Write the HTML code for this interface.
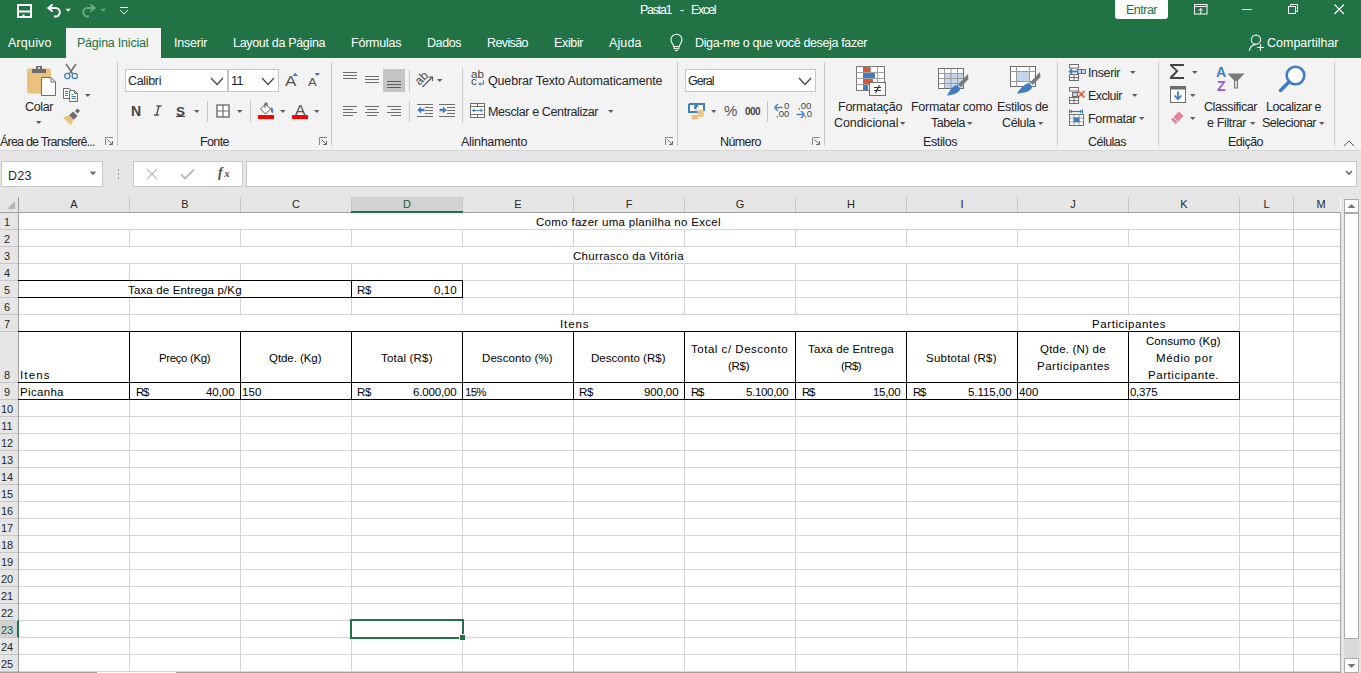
<!DOCTYPE html>
<html><head><meta charset="utf-8">
<style>
*{box-sizing:border-box}
html,body{margin:0;padding:0}
body{width:1361px;height:673px;overflow:hidden;position:relative;background:#fff;font-family:"Liberation Sans",sans-serif;font-size:12px;color:#000}
.a{position:absolute}
.t{position:absolute;white-space:nowrap;line-height:15px;font-size:12px}
svg{position:absolute;overflow:visible}
</style></head><body>

<div class="a" style="left:0px;top:0px;width:1361px;height:58px;background:#217346;"></div>
<div class="a" style="left:66px;top:28px;width:95px;height:30px;background:#f3f3f3;"></div>
<div class="a" style="left:0px;top:58px;width:1361px;height:92px;background:#f3f3f3;"></div>
<div class="a" style="left:0px;top:150px;width:1361px;height:1px;background:#d6d6d6;"></div>
<div class="a" style="left:0px;top:151px;width:1361px;height:46px;background:#e6e6e6;"></div>
<svg style="left:17px;top:4px" width="16" height="15" viewBox="0 0 16 15"><path d="M1 1 H14 V13 H1 Z" fill="none" stroke="#fff" stroke-width="2"/><path d="M2 7.5 H13" stroke="#fff" stroke-width="2"/><rect x="5.5" y="10.5" width="2" height="2.5" fill="#fff"/></svg>
<svg style="left:46px;top:3px" width="20" height="16" viewBox="0 0 20 16"><path d="M2.5 5 H9.5 A4.3 4.3 0 0 1 9.5 13.6 H8" fill="none" stroke="#fff" stroke-width="2"/><path d="M0.8 5 L6 0.8 L7.2 2.2 L3.6 5 L7.2 7.8 L6 9.2 Z" fill="#fff"/></svg>
<svg style="left:65px;top:8px" width="7" height="5" viewBox="0 0 7 5"><path d="M0.5 0.8 H6 L3.25 3.8 Z" fill="#fff"/></svg>
<svg style="left:81px;top:3px" width="20" height="16" viewBox="0 0 20 16"><path d="M13.5 5 H6.5 A4.3 4.3 0 0 0 6.5 13.6 H8" fill="none" stroke="#6ba887" stroke-width="2"/><path d="M15.2 5 L10 0.8 L8.8 2.2 L12.4 5 L8.8 7.8 L10 9.2 Z" fill="#6ba887"/></svg>
<svg style="left:100px;top:8px" width="7" height="5" viewBox="0 0 7 5"><path d="M0.5 0.8 H6 L3.25 3.8 Z" fill="#6ba887"/></svg>
<svg style="left:119px;top:6px" width="10" height="9" viewBox="0 0 10 9"><path d="M1 1.5 H9" stroke="#fff" stroke-width="1"/><path d="M1.2 4.2 L5 8 L8.8 4.2" fill="none" stroke="#fff" stroke-width="1"/></svg>
<div class="t" style="left:640px;top:3px;font-size:12.5px;letter-spacing:-1.284px;color:#fff;">Pasta1</div>
<div class="t" style="left:680px;top:3px;font-size:12.5px;color:#fff;">-</div>
<div class="t" style="left:691px;top:3px;font-size:12.5px;letter-spacing:-1.270px;color:#fff;">Excel</div>
<div class="a" style="left:1115px;top:0px;width:53px;height:19px;background:#fff;border-radius:0 0 3px 3px"></div>
<div class="t" style="left:1126px;top:3px;font-size:12.5px;letter-spacing:-0.506px;color:#217346;">Entrar</div>
<svg style="left:1194px;top:4px" width="14" height="11" viewBox="0 0 14 11"><rect x="0.5" y="0.5" width="12.5" height="9.5" fill="none" stroke="#fff"/><path d="M0.5 2.5 H13" stroke="#fff"/><path d="M6.75 10 V4.5 M4.5 6.8 L6.75 4.5 L9 6.8" fill="none" stroke="#fff"/></svg>
<div class="a" style="left:1242px;top:9px;width:10px;height:1px;background:#fff;"></div>
<svg style="left:1288px;top:4px" width="11" height="11" viewBox="0 0 11 11"><path d="M2.5 2.5 V0.5 H9.5 V7.5 H7.5" fill="none" stroke="#fff"/><rect x="0.5" y="2.5" width="7" height="7" fill="none" stroke="#fff"/></svg>
<svg style="left:1334px;top:4px" width="11" height="11" viewBox="0 0 11 11"><path d="M0.5 0.5 L10 10 M10 0.5 L0.5 10" stroke="#fff" stroke-width="1.1"/></svg>
<div class="t" style="left:8px;top:36px;font-size:12.5px;letter-spacing:0.185px;color:#fff;">Arquivo</div>
<div class="t" style="left:77px;top:36px;font-size:12.5px;letter-spacing:-0.221px;color:#217346;">Página Inicial</div>
<div class="t" style="left:174px;top:36px;font-size:12.5px;letter-spacing:-0.203px;color:#fff;">Inserir</div>
<div class="t" style="left:233px;top:36px;font-size:12.5px;letter-spacing:-0.321px;color:#fff;">Layout da Página</div>
<div class="t" style="left:351px;top:36px;font-size:12.5px;letter-spacing:-0.228px;color:#fff;">Fórmulas</div>
<div class="t" style="left:427px;top:36px;font-size:12.5px;letter-spacing:-0.410px;color:#fff;">Dados</div>
<div class="t" style="left:487px;top:36px;font-size:12.5px;letter-spacing:-0.612px;color:#fff;">Revisão</div>
<div class="t" style="left:554px;top:36px;font-size:12.5px;letter-spacing:-0.353px;color:#fff;">Exibir</div>
<div class="t" style="left:609px;top:36px;font-size:12.5px;letter-spacing:0.129px;color:#fff;">Ajuda</div>
<svg style="left:669px;top:33px" width="16" height="20" viewBox="0 0 16 20"><path d="M4.8 13.5 C4.5 11.5 2 9.8 2 6.8 A5.5 5.5 0 0 1 13 6.8 C13 9.8 10.5 11.5 10.2 13.5 Z" fill="none" stroke="#fff" stroke-width="1.1"/><rect x="5.2" y="13.5" width="4.6" height="2.2" fill="none" stroke="#fff" stroke-width="1"/><path d="M6 17.5 H9" stroke="#fff" stroke-width="1"/></svg>
<div class="t" style="left:695px;top:36px;font-size:12.5px;letter-spacing:-0.364px;color:#fff;">Diga-me o que você deseja fazer</div>
<svg style="left:1248px;top:33px" width="18" height="20" viewBox="0 0 18 20"><circle cx="8" cy="6.7" r="4.6" fill="none" stroke="#fff" stroke-width="1.1"/><path d="M1.3 18 C1.8 14.2 4.3 11.8 8 11.4" fill="none" stroke="#fff" stroke-width="1.1"/><path d="M9 14.5 H16 M12.5 11.2 V18" stroke="#fff" stroke-width="1.1"/></svg>
<div class="t" style="left:1267px;top:36px;font-size:12.5px;letter-spacing:-0.004px;color:#fff;">Compartilhar</div>
<div class="a" style="left:117px;top:62px;width:1px;height:84px;background:#c6c6c6;"></div>
<div class="a" style="left:331px;top:62px;width:1px;height:84px;background:#c6c6c6;"></div>
<div class="a" style="left:677px;top:62px;width:1px;height:84px;background:#c6c6c6;"></div>
<div class="a" style="left:824px;top:62px;width:1px;height:84px;background:#c6c6c6;"></div>
<div class="a" style="left:1057px;top:62px;width:1px;height:84px;background:#c6c6c6;"></div>
<div class="a" style="left:1158px;top:62px;width:1px;height:84px;background:#c6c6c6;"></div>
<div class="a" style="left:1334px;top:62px;width:1px;height:84px;background:#c6c6c6;"></div>
<svg style="left:26px;top:65px" width="31" height="32" viewBox="0 0 31 32"><rect x="1" y="3.5" width="24" height="25" rx="2" fill="#ebc27d"/><path d="M6 4 H20 V8 H6 Z" fill="#6d6d6d"/><path d="M10 1 H16 V4 H10 Z" fill="#6d6d6d"/><circle cx="13" cy="3" r="1" fill="#f3f3f3"/><path d="M15.5 12.5 H25 L29.5 17 V30.5 H15.5 Z" fill="#fff" stroke="#6d6d6d" stroke-width="1"/><path d="M25 12.5 V17 H29.5" fill="none" stroke="#6d6d6d"/></svg>
<div class="t" style="left:25px;top:100px;font-size:12.5px;letter-spacing:-0.344px;color:#262626;">Colar</div>
<svg style="left:36px;top:121px" width="6" height="4" viewBox="0 0 6 4"><path d="M0 0 H5.5 L2.75 3 Z" fill="#5e5e5e"/></svg>
<svg style="left:63px;top:63px" width="16" height="17" viewBox="0 0 16 17"><path d="M3 1 L9.5 10.5 M13 1 L6.5 10.5" stroke="#6d6d6d" stroke-width="1.5"/><circle cx="4.3" cy="13" r="2.6" fill="none" stroke="#3f7cc0" stroke-width="1.2"/><circle cx="11.7" cy="13" r="2.6" fill="none" stroke="#3f7cc0" stroke-width="1.2"/></svg>
<svg style="left:62px;top:87px" width="17" height="16" viewBox="0 0 17 16"><path d="M1.5 1.5 H7.5 L9.5 3.5 V11.5 H1.5 Z" fill="#fff" stroke="#6d6d6d"/><path d="M3 4.5 H6 M3 6.5 H6 M3 8.5 H6" stroke="#3f7cc0"/><path d="M7.5 3.5 H12.5 L15.5 6.5 V14.5 H7.5 Z" fill="#fff" stroke="#6d6d6d"/><path d="M12.5 3.5 V6.5 H15.5" fill="none" stroke="#6d6d6d"/><path d="M9.5 7.5 H11.5 M9.5 9.5 H14 M9.5 11.5 H14" stroke="#3f7cc0"/></svg>
<svg style="left:85px;top:94px" width="6" height="4" viewBox="0 0 6 4"><path d="M0 0 H5.5 L2.75 3 Z" fill="#5e5e5e"/></svg>
<svg style="left:62px;top:109px" width="18" height="17" viewBox="0 0 18 17"><path d="M1 8.5 L7 6 L11.5 10.5 L9 16.5 Z" fill="#ebc27d"/><path d="M7.2 6.2 L11 2.4 L15.6 7 L11.8 10.8 Z" fill="#6d6d6d"/><path d="M13 2 L15.5 -0.5 L18 2 L15.5 4.5 Z" fill="#6d6d6d"/></svg>
<div class="t" style="left:0px;top:135px;font-size:12.5px;letter-spacing:-0.787px;color:#262626;">Área de Transferê...</div>
<svg style="left:105px;top:137px" width="9" height="9" viewBox="0 0 9 9"><path d="M0.5 8 V0.5 H8" fill="none" stroke="#8a8a8a"/><path d="M2.5 2.5 L7.5 7.5 M4 7.5 H7.5 V4" fill="none" stroke="#6d6d6d"/></svg>
<div class="a" style="left:125px;top:69px;width:103px;height:23px;background:#fff;border:1px solid #c6c6c6"></div>
<div class="a" style="left:228px;top:69px;width:51px;height:23px;background:#fff;border:1px solid #c6c6c6"></div>
<div class="t" style="left:128px;top:74px;font-size:12.5px;letter-spacing:-0.323px;color:#262626;">Calibri</div>
<div class="t" style="left:231px;top:74px;font-size:12.5px;letter-spacing:-0.484px;color:#262626;">11</div>
<svg style="left:210px;top:77px" width="15" height="9" viewBox="0 0 15 9"><path d="M1 1 L7 7.5 L13 1" fill="none" stroke="#444" stroke-width="1.2"/></svg>
<svg style="left:261px;top:77px" width="15" height="9" viewBox="0 0 15 9"><path d="M1 1 L7 7.5 L13 1" fill="none" stroke="#444" stroke-width="1.2"/></svg>
<div class="t" style="left:285px;top:74px;font-size:14px;color:#555;transform:scaleX(1.22);transform-origin:0 0">A</div>
<svg style="left:292px;top:72px" width="7" height="5" viewBox="0 0 7 5"><path d="M0.5 4 H6 L3.25 0.8 Z" fill="#3f7cc0"/></svg>
<div class="t" style="left:308px;top:75px;font-size:11.5px;color:#555;transform:scaleX(1.15);transform-origin:0 0">A</div>
<svg style="left:314px;top:72px" width="7" height="5" viewBox="0 0 7 5"><path d="M0.5 1 H6 L3.25 4 Z" fill="#3f7cc0"/></svg>
<div class="t" style="left:131px;top:104px;font-size:14px;font-weight:bold;color:#444">N</div>
<svg style="left:153px;top:105px" width="9" height="11" viewBox="0 0 9 11"><path d="M3.5 1 H8.5 M1 10 H6 M6 1 L3.5 10" fill="none" stroke="#555" stroke-width="1.5"/></svg>
<div class="t" style="left:176px;top:104px;font-size:13.5px;font-weight:bold;color:#444">S</div>
<div class="a" style="left:176px;top:116px;width:9px;height:1px;background:#444;"></div>
<svg style="left:194px;top:110px" width="6" height="4" viewBox="0 0 6 4"><path d="M0 0 H5.5 L2.75 3 Z" fill="#5e5e5e"/></svg>
<div class="a" style="left:207px;top:101px;width:1px;height:21px;background:#c6c6c6;"></div>
<svg style="left:216px;top:104px" width="14" height="14" viewBox="0 0 14 14"><rect x="1" y="1" width="12" height="12" fill="#fff" stroke="#6d6d6d" stroke-width="1.4"/><path d="M7 1 V13 M1 7 H13" stroke="#6d6d6d" stroke-width="1.2"/></svg>
<svg style="left:237px;top:110px" width="6" height="4" viewBox="0 0 6 4"><path d="M0 0 H5.5 L2.75 3 Z" fill="#5e5e5e"/></svg>
<div class="a" style="left:250px;top:101px;width:1px;height:21px;background:#c6c6c6;"></div>
<svg style="left:257px;top:102px" width="18" height="14" viewBox="0 0 18 14"><path d="M3.5 7 L8.5 2 L13.5 7 L8.5 12 Z" fill="#fff" stroke="#555" stroke-width="1"/><path d="M8 6 V1 H10 V4" fill="none" stroke="#555" stroke-width="1"/><path d="M14 5 C16 6 17 9 15.5 11.5 L14 9.5 Z" fill="#3f7cc0"/></svg>
<div class="a" style="left:258px;top:115px;width:16px;height:4px;background:#ff0000;"></div>
<svg style="left:280px;top:110px" width="6" height="4" viewBox="0 0 6 4"><path d="M0 0 H5.5 L2.75 3 Z" fill="#5e5e5e"/></svg>
<div class="t" style="left:295px;top:102px;font-size:15px;color:#555;transform:scaleX(1.05);transform-origin:0 0">A</div>
<div class="a" style="left:292px;top:115px;width:16px;height:4px;background:#ff0000;"></div>
<svg style="left:314px;top:110px" width="6" height="4" viewBox="0 0 6 4"><path d="M0 0 H5.5 L2.75 3 Z" fill="#5e5e5e"/></svg>
<div class="t" style="left:200px;top:135px;font-size:12.5px;letter-spacing:-0.617px;color:#262626;">Fonte</div>
<svg style="left:319px;top:137px" width="9" height="9" viewBox="0 0 9 9"><path d="M0.5 8 V0.5 H8" fill="none" stroke="#8a8a8a"/><path d="M2.5 2.5 L7.5 7.5 M4 7.5 H7.5 V4" fill="none" stroke="#6d6d6d"/></svg>
<div class="a" style="left:343px;top:72px;width:14px;height:1px;background:#6d6d6d;"></div>
<div class="a" style="left:343px;top:75px;width:14px;height:1px;background:#6d6d6d;"></div>
<div class="a" style="left:343px;top:78px;width:14px;height:1px;background:#6d6d6d;"></div>
<div class="a" style="left:365px;top:76px;width:14px;height:1px;background:#6d6d6d;"></div>
<div class="a" style="left:365px;top:79px;width:14px;height:1px;background:#6d6d6d;"></div>
<div class="a" style="left:365px;top:82px;width:14px;height:1px;background:#6d6d6d;"></div>
<div class="a" style="left:383px;top:69px;width:22px;height:23px;background:#c5c5c5;"></div>
<div class="a" style="left:387px;top:81px;width:14px;height:1px;background:#5a5a5a;"></div>
<div class="a" style="left:387px;top:84px;width:14px;height:1px;background:#5a5a5a;"></div>
<div class="a" style="left:387px;top:87px;width:14px;height:1px;background:#5a5a5a;"></div>
<div class="a" style="left:409px;top:70px;width:1px;height:22px;background:#c6c6c6;"></div>
<div class="t" style="left:415px;top:71px;font-size:12px;color:#444;transform:rotate(-45deg);transform-origin:50% 50%">ab</div>
<svg style="left:421px;top:75px" width="14" height="14" viewBox="0 0 14 14"><path d="M1.5 12 L11.5 2" stroke="#555" stroke-width="1.1"/><path d="M7.5 2 H11.5 V6" fill="none" stroke="#555" stroke-width="1.1"/></svg>
<svg style="left:437px;top:79px" width="6" height="4" viewBox="0 0 6 4"><path d="M0 0 H5.5 L2.75 3 Z" fill="#5e5e5e"/></svg>
<div class="a" style="left:343px;top:106px;width:14px;height:1px;background:#6d6d6d;"></div>
<div class="a" style="left:343px;top:109px;width:10px;height:1px;background:#6d6d6d;"></div>
<div class="a" style="left:343px;top:112px;width:14px;height:1px;background:#6d6d6d;"></div>
<div class="a" style="left:343px;top:115px;width:10px;height:1px;background:#6d6d6d;"></div>
<div class="a" style="left:365px;top:106px;width:14px;height:1px;background:#6d6d6d;"></div>
<div class="a" style="left:367px;top:109px;width:10px;height:1px;background:#6d6d6d;"></div>
<div class="a" style="left:365px;top:112px;width:14px;height:1px;background:#6d6d6d;"></div>
<div class="a" style="left:367px;top:115px;width:10px;height:1px;background:#6d6d6d;"></div>
<div class="a" style="left:387px;top:106px;width:14px;height:1px;background:#6d6d6d;"></div>
<div class="a" style="left:391px;top:109px;width:10px;height:1px;background:#6d6d6d;"></div>
<div class="a" style="left:387px;top:112px;width:14px;height:1px;background:#6d6d6d;"></div>
<div class="a" style="left:391px;top:115px;width:10px;height:1px;background:#6d6d6d;"></div>
<div class="a" style="left:409px;top:101px;width:1px;height:21px;background:#c6c6c6;"></div>
<div class="a" style="left:417px;top:104px;width:16px;height:1px;background:#6d6d6d;"></div>
<div class="a" style="left:425px;top:107px;width:8px;height:1px;background:#6d6d6d;"></div>
<div class="a" style="left:425px;top:110px;width:8px;height:1px;background:#6d6d6d;"></div>
<div class="a" style="left:425px;top:113px;width:8px;height:1px;background:#6d6d6d;"></div>
<div class="a" style="left:417px;top:116px;width:16px;height:1px;background:#6d6d6d;"></div>
<svg style="left:417px;top:106px" width="8" height="8" viewBox="0 0 8 8"><path d="M0.3 4 L4 0.5 V2.8 H7.5 V5.2 H4 V7.5 Z" fill="#3f7cc0"/></svg>
<div class="a" style="left:439px;top:104px;width:16px;height:1px;background:#6d6d6d;"></div>
<div class="a" style="left:447px;top:107px;width:8px;height:1px;background:#6d6d6d;"></div>
<div class="a" style="left:447px;top:110px;width:8px;height:1px;background:#6d6d6d;"></div>
<div class="a" style="left:447px;top:113px;width:8px;height:1px;background:#6d6d6d;"></div>
<div class="a" style="left:439px;top:116px;width:16px;height:1px;background:#6d6d6d;"></div>
<svg style="left:439px;top:106px" width="8" height="8" viewBox="0 0 8 8"><path d="M7.7 4 L4 0.5 V2.8 H0.5 V5.2 H4 V7.5 Z" fill="#3f7cc0"/></svg>
<div class="a" style="left:462px;top:68px;width:1px;height:55px;background:#c6c6c6;"></div>
<div class="t" style="left:471px;top:69px;font-size:11.5px;line-height:11px;color:#444">ab</div>
<div class="t" style="left:471px;top:76px;font-size:11.5px;line-height:11px;color:#444">c</div>
<svg style="left:478px;top:80px" width="7" height="7" viewBox="0 0 7 7"><path d="M5.5 0.5 V4 H1.5" fill="none" stroke="#3f7cc0" stroke-width="1.1"/><path d="M0.3 4 L2.5 2 V6 Z" fill="#3f7cc0"/></svg>
<div class="t" style="left:488px;top:74px;font-size:12.5px;letter-spacing:-0.161px;color:#262626;">Quebrar Texto Automaticamente</div>
<svg style="left:469px;top:102px" width="17" height="17" viewBox="0 0 17 17"><rect x="1.5" y="1.5" width="14" height="14" fill="#fff" stroke="#6d6d6d"/><path d="M1.5 4.5 H15.5 M1.5 12.5 H15.5 M8.5 1.5 V4.5 M8.5 12.5 V15.5" stroke="#6d6d6d"/><path d="M3.5 8.5 H13.5" stroke="#3f7cc0"/><path d="M3 8.5 L5.5 6.5 V10.5 Z M14 8.5 L11.5 6.5 V10.5 Z" fill="#3f7cc0"/></svg>
<div class="t" style="left:488px;top:105px;font-size:12.5px;letter-spacing:-0.379px;color:#262626;">Mesclar e Centralizar</div>
<svg style="left:608px;top:110px" width="6" height="4" viewBox="0 0 6 4"><path d="M0 0 H5.5 L2.75 3 Z" fill="#5e5e5e"/></svg>
<div class="t" style="left:461px;top:135px;font-size:12.5px;letter-spacing:-0.300px;color:#262626;">Alinhamento</div>
<svg style="left:665px;top:137px" width="9" height="9" viewBox="0 0 9 9"><path d="M0.5 8 V0.5 H8" fill="none" stroke="#8a8a8a"/><path d="M2.5 2.5 L7.5 7.5 M4 7.5 H7.5 V4" fill="none" stroke="#6d6d6d"/></svg>
<div class="a" style="left:685px;top:69px;width:131px;height:23px;background:#fff;border:1px solid #c6c6c6"></div>
<div class="t" style="left:688px;top:74px;font-size:12.5px;letter-spacing:-1.016px;color:#262626;">Geral</div>
<svg style="left:798px;top:77px" width="15" height="9" viewBox="0 0 15 9"><path d="M1 1 L7 7.5 L13 1" fill="none" stroke="#444" stroke-width="1.2"/></svg>
<svg style="left:687px;top:102px" width="19" height="19" viewBox="0 0 19 19"><path d="M2 2 H17 V9.5 H12 V8 H2 Z" fill="#fff"/><path d="M2 2 H17 V9 M11 10 H2 V2" fill="none" stroke="#3f7cc0" stroke-width="2"/><path d="M9.5 7.5 A2.4 2.4 0 1 1 11.5 4.5 L9.5 5.5 Z" fill="#3f7cc0"/><ellipse cx="13.5" cy="9" rx="3.6" ry="1.3" fill="#ebc27d"/><ellipse cx="13.5" cy="11.3" rx="3.6" ry="1.3" fill="#ebc27d"/><ellipse cx="13.5" cy="13.6" rx="3.6" ry="1.3" fill="#ebc27d"/><ellipse cx="8" cy="14" rx="3.6" ry="1.3" fill="#ebc27d"/><ellipse cx="8" cy="16.3" rx="3.6" ry="1.3" fill="#ebc27d"/></svg>
<svg style="left:711px;top:110px" width="6" height="4" viewBox="0 0 6 4"><path d="M0 0 H5.5 L2.75 3 Z" fill="#5e5e5e"/></svg>
<div class="t" style="left:724px;top:103px;font-size:15px;color:#555">%</div>
<div class="t" style="left:745px;top:104px;font-size:10px;color:#444;letter-spacing:-0.5px;font-weight:bold">000</div>
<div class="a" style="left:767px;top:101px;width:1px;height:21px;background:#c6c6c6;"></div>
<svg style="left:774px;top:103px" width="10" height="8" viewBox="0 0 10 8"><path d="M2 4.5 H8.5" stroke="#3f7cc0" stroke-width="1.4"/><path d="M0.5 4.5 L4 1 M0.5 4.5 L4 8" stroke="#3f7cc0" stroke-width="1.4"/></svg>
<div class="t" style="left:784px;top:101px;font-size:9.5px;line-height:10px;color:#444">0</div>
<div class="t" style="left:776px;top:109px;font-size:9.5px;line-height:10px;color:#444">,00</div>
<svg style="left:796px;top:110px" width="10" height="8" viewBox="0 0 10 8"><path d="M0.5 4.5 H7" stroke="#3f7cc0" stroke-width="1.4"/><path d="M8.5 4.5 L5 1 M8.5 4.5 L5 8" stroke="#3f7cc0" stroke-width="1.4"/></svg>
<div class="t" style="left:798px;top:101px;font-size:9.5px;line-height:10px;color:#444">,00</div>
<div class="t" style="left:804px;top:109px;font-size:9.5px;line-height:10px;color:#444">,0</div>
<div class="t" style="left:720px;top:135px;font-size:12.5px;letter-spacing:-0.591px;color:#262626;">Número</div>
<svg style="left:812px;top:137px" width="9" height="9" viewBox="0 0 9 9"><path d="M0.5 8 V0.5 H8" fill="none" stroke="#8a8a8a"/><path d="M2.5 2.5 L7.5 7.5 M4 7.5 H7.5 V4" fill="none" stroke="#6d6d6d"/></svg>
<svg style="left:855px;top:65px" width="32" height="32" viewBox="0 0 32 32"><rect x="1.5" y="1.5" width="28" height="24" fill="#fff" stroke="#7a7a7a"/><path d="M1.5 7.5 H29.5 M1.5 13.5 H29.5 M1.5 19.5 H29.5 M8.5 1.5 V25.5 M15.5 1.5 V25.5 M22.5 1.5 V25.5" stroke="#a0a0a0" stroke-width="1" fill="none"/><path d="M8 2 H15 V7 H8 Z" fill="#e0553a"/><path d="M8 8 H20 V13 H8 Z" fill="#3f7cc0"/><path d="M8 14 H18 V19 H8 Z" fill="#e0553a"/><path d="M8 20 H13 V25 H8 Z" fill="#3f7cc0"/><rect x="14.5" y="17.5" width="16" height="13" fill="#fff" stroke="#6d6d6d"/><path d="M19 22.5 H26 M19 25.5 H26 M24.5 20 L20.5 28" stroke="#333" stroke-width="1.1" fill="none"/></svg>
<svg style="left:937px;top:66px" width="34" height="31" viewBox="0 0 34 31"><rect x="1.5" y="2.5" width="25" height="20" fill="#fff" stroke="#6d6d6d"/><rect x="8" y="7.5" width="18" height="14.5" fill="#c3d6ec"/><path d="M1.5 7.5 H26.5 M1.5 12.5 H26.5 M1.5 17.5 H26.5 M7.5 2.5 V22.5 M14 2.5 V22.5 M20.5 2.5 V22.5" stroke="#9a9a9a" fill="none"/><path d="M31 8 L31.5 13 L24 21 L21 18.5 Z" fill="#7a7a7a"/><path d="M20 19 L23.5 22.5 C22 27 17 29 10 29.5 C12 26 15 20 20 19 Z" fill="#3f7cc0"/></svg>
<svg style="left:1009px;top:64px" width="34" height="31" viewBox="0 0 34 31"><rect x="1.5" y="2.5" width="25" height="20" fill="#fff" stroke="#6d6d6d"/><rect x="7.5" y="7.5" width="13" height="10" fill="#c3d6ec"/><path d="M1.5 7.5 H26.5 M1.5 17.5 H26.5 M7.5 2.5 V22.5 M20.5 2.5 V22.5" stroke="#9a9a9a" fill="none"/><path d="M31 8 L31.5 13 L24 21 L21 18.5 Z" fill="#7a7a7a"/><path d="M20 19 L23.5 22.5 C22 27 17 29 8 29.5 C10 26 15 20 20 19 Z" fill="#3f7cc0"/></svg>
<div class="t" style="left:838px;top:100px;font-size:12.5px;letter-spacing:-0.243px;color:#262626;">Formatação</div>
<div class="t" style="left:834px;top:116px;font-size:12.5px;letter-spacing:-0.084px;color:#262626;">Condicional</div>
<svg style="left:900px;top:122px" width="6" height="4" viewBox="0 0 6 4"><path d="M0 0 H5.5 L2.75 3 Z" fill="#5e5e5e"/></svg>
<div class="t" style="left:911px;top:100px;font-size:12.5px;letter-spacing:-0.268px;color:#262626;">Formatar como</div>
<div class="t" style="left:931px;top:116px;font-size:12.5px;letter-spacing:-0.469px;color:#262626;">Tabela</div>
<svg style="left:967px;top:122px" width="6" height="4" viewBox="0 0 6 4"><path d="M0 0 H5.5 L2.75 3 Z" fill="#5e5e5e"/></svg>
<div class="t" style="left:997px;top:100px;font-size:12.5px;letter-spacing:-0.300px;color:#262626;">Estilos de</div>
<div class="t" style="left:1002px;top:116px;font-size:12.5px;letter-spacing:-0.391px;color:#262626;">Célula</div>
<svg style="left:1038px;top:122px" width="6" height="4" viewBox="0 0 6 4"><path d="M0 0 H5.5 L2.75 3 Z" fill="#5e5e5e"/></svg>
<div class="t" style="left:923px;top:135px;font-size:12.5px;letter-spacing:-0.388px;color:#262626;">Estilos</div>
<svg style="left:1068px;top:63px" width="19" height="19" viewBox="0 0 19 19"><rect x="1.5" y="1.5" width="9" height="3.5" fill="#fff" stroke="#6d6d6d"/><rect x="9.5" y="6.5" width="8" height="4" fill="#c3d6ec" stroke="#6d6d6d"/><path d="M13.5 6.5 V10.5" stroke="#6d6d6d"/><rect x="1.5" y="11.5" width="9" height="6" fill="#fff" stroke="#6d6d6d"/><path d="M1.5 14.5 H10.5 M6 11.5 V17.5" stroke="#6d6d6d"/><path d="M3 8.5 H9" stroke="#3f7cc0" stroke-width="1.8"/><path d="M0.5 8.5 L4.2 4.8 V12.2 Z" fill="#3f7cc0"/></svg>
<div class="t" style="left:1088px;top:66px;font-size:12.5px;letter-spacing:-0.370px;color:#262626;">Inserir</div>
<svg style="left:1130px;top:71px" width="6" height="4" viewBox="0 0 6 4"><path d="M0 0 H5.5 L2.75 3 Z" fill="#5e5e5e"/></svg>
<svg style="left:1068px;top:86px" width="19" height="19" viewBox="0 0 19 19"><rect x="1.5" y="1.5" width="9" height="3.5" fill="#fff" stroke="#6d6d6d"/><rect x="4.5" y="6.5" width="5" height="4" fill="#c3d6ec" stroke="#6d6d6d"/><rect x="1.5" y="11.5" width="9" height="6" fill="#fff" stroke="#6d6d6d"/><path d="M1.5 14.5 H10.5 M6 11.5 V17.5" stroke="#6d6d6d"/><path d="M10 5 L16.5 11.5 M16.5 5 L10 11.5" stroke="#e0553a" stroke-width="1.7"/></svg>
<div class="t" style="left:1088px;top:89px;font-size:12.5px;letter-spacing:-0.503px;color:#262626;">Excluir</div>
<svg style="left:1132px;top:94px" width="6" height="4" viewBox="0 0 6 4"><path d="M0 0 H5.5 L2.75 3 Z" fill="#5e5e5e"/></svg>
<svg style="left:1068px;top:109px" width="18" height="18" viewBox="0 0 18 18"><path d="M2 2.5 H14" stroke="#3f7cc0" stroke-width="1.2"/><path d="M1.5 0.5 V4.5 M14.5 0.5 V4.5" stroke="#3f7cc0"/><path d="M1.5 2.5 L4 0.8 V4.2 Z M14.5 2.5 L12 0.8 V4.2 Z" fill="#3f7cc0"/><rect x="1.5" y="5.5" width="14" height="11" fill="#fff" stroke="#6d6d6d"/><path d="M1.5 9 H15.5 M1.5 12.8 H15.5 M6 5.5 V16.5 M11 5.5 V16.5" stroke="#a0a0a0"/><rect x="5.5" y="8.5" width="6" height="4.8" fill="#3f7cc0"/></svg>
<div class="t" style="left:1088px;top:112px;font-size:12.5px;letter-spacing:-0.312px;color:#262626;">Formatar</div>
<svg style="left:1139px;top:117px" width="6" height="4" viewBox="0 0 6 4"><path d="M0 0 H5.5 L2.75 3 Z" fill="#5e5e5e"/></svg>
<div class="t" style="left:1088px;top:135px;font-size:12.5px;letter-spacing:-0.534px;color:#262626;">Células</div>
<svg style="left:1169px;top:63px" width="18" height="17" viewBox="0 0 18 17"><path d="M1 1 H15 V3 H4 L9.5 8 L4 14 H15 V16 H1 V14 L6.8 8 L1 2.5 Z" fill="#444"/></svg>
<svg style="left:1192px;top:71px" width="6" height="4" viewBox="0 0 6 4"><path d="M0 0 H5.5 L2.75 3 Z" fill="#5e5e5e"/></svg>
<svg style="left:1170px;top:86px" width="17" height="18" viewBox="0 0 17 18"><rect x="0.5" y="0.5" width="15" height="16" fill="#fff" stroke="#6d6d6d"/><rect x="0.5" y="0.5" width="15" height="3" fill="#6d6d6d"/><path d="M8 5.5 V13" stroke="#3f7cc0" stroke-width="1.8"/><path d="M4.5 9.5 L8 13.2 L11.5 9.5" fill="none" stroke="#3f7cc0" stroke-width="1.8"/></svg>
<svg style="left:1190px;top:94px" width="6" height="4" viewBox="0 0 6 4"><path d="M0 0 H5.5 L2.75 3 Z" fill="#5e5e5e"/></svg>
<svg style="left:1170px;top:110px" width="16" height="14" viewBox="0 0 16 14"><path d="M1 9.5 L9 1.5 L13.5 6 L5.5 14 Z" fill="#e9819a"/><path d="M3.2 7.3 L7.7 11.8" stroke="#f3f3f3" stroke-width="1"/></svg>
<svg style="left:1190px;top:117px" width="6" height="4" viewBox="0 0 6 4"><path d="M0 0 H5.5 L2.75 3 Z" fill="#5e5e5e"/></svg>
<div class="t" style="left:1216px;top:65px;font-size:14px;line-height:14px;font-weight:bold;color:#3f7cc0">A</div>
<div class="t" style="left:1217px;top:79px;font-size:14px;line-height:14px;font-weight:bold;color:#9b59c2">Z</div>
<svg style="left:1227px;top:73px" width="19" height="16" viewBox="0 0 19 16"><path d="M0.5 0.5 H17.5 L11 7.5 V15.5 H7 V7.5 Z" fill="#7a7a7a"/><path d="M8.2 8 V14.5 H9.8 V8" fill="#f3f3f3"/></svg>
<svg style="left:1278px;top:65px" width="30" height="29" viewBox="0 0 30 29"><circle cx="17.5" cy="10.5" r="8.8" fill="#fff" stroke="#3f7cc0" stroke-width="2.6"/><path d="M11 17 L2.5 25.5" stroke="#3f7cc0" stroke-width="3.5" stroke-linecap="round"/></svg>
<div class="t" style="left:1204px;top:100px;font-size:12.5px;letter-spacing:-0.416px;color:#262626;">Classificar</div>
<div class="t" style="left:1207px;top:116px;font-size:12.5px;letter-spacing:-0.357px;color:#262626;">e Filtrar</div>
<svg style="left:1250px;top:122px" width="6" height="4" viewBox="0 0 6 4"><path d="M0 0 H5.5 L2.75 3 Z" fill="#5e5e5e"/></svg>
<div class="t" style="left:1266px;top:100px;font-size:12.5px;letter-spacing:-0.495px;color:#262626;">Localizar e</div>
<div class="t" style="left:1262px;top:116px;font-size:12.5px;letter-spacing:-0.509px;color:#262626;">Selecionar</div>
<svg style="left:1319px;top:122px" width="6" height="4" viewBox="0 0 6 4"><path d="M0 0 H5.5 L2.75 3 Z" fill="#5e5e5e"/></svg>
<div class="t" style="left:1228px;top:135px;font-size:12.5px;letter-spacing:-0.547px;color:#262626;">Edição</div>
<svg style="left:1343px;top:140px" width="12" height="7" viewBox="0 0 12 7"><path d="M1 6 L6 1 L11 6" fill="none" stroke="#555" stroke-width="1"/></svg>
<div class="a" style="left:1px;top:161px;width:102px;height:26px;background:#fff;border:1px solid #c6c6c6"></div>
<div class="t" style="left:8px;top:169px;font-size:12.5px;letter-spacing:0.281px;color:#262626;">D23</div>
<svg style="left:89px;top:171px" width="8" height="5" viewBox="0 0 8 5"><path d="M0.5 0.5 H7.5 L4 4.5 Z" fill="#777"/></svg>
<div class="a" style="left:118px;top:169px;width:1px;height:2px;background:#9a9a9a;"></div>
<div class="a" style="left:118px;top:173px;width:1px;height:2px;background:#9a9a9a;"></div>
<div class="a" style="left:118px;top:177px;width:1px;height:2px;background:#9a9a9a;"></div>
<div class="a" style="left:133px;top:161px;width:110px;height:26px;background:#fff;border:1px solid #c6c6c6"></div>
<svg style="left:146px;top:168px" width="12" height="12" viewBox="0 0 12 12"><path d="M1 1 L11 11 M11 1 L1 11" stroke="#bdbdbd" stroke-width="1.3"/></svg>
<svg style="left:180px;top:168px" width="15" height="12" viewBox="0 0 15 12"><path d="M1 6.5 L5 10.5 L14 1.5" fill="none" stroke="#bdbdbd" stroke-width="2"/></svg>
<div class="t" style="left:218px;top:165px;font-size:14px;font-style:italic;font-weight:bold;font-family:'Liberation Serif';color:#505050">f<span style="font-size:11px;margin-left:1.5px">x</span></div>
<div class="a" style="left:246px;top:161px;width:1111px;height:26px;background:#fff;border:1px solid #c6c6c6"></div>
<svg style="left:1345px;top:170px" width="8" height="6" viewBox="0 0 8 6"><path d="M1 1 L4 4 L7 1" fill="none" stroke="#666" stroke-width="1.6"/></svg>
<div class="a" style="left:19px;top:213px;width:1321px;height:460px;background:#fff;"></div>
<div class="a" style="left:0px;top:197px;width:1340px;height:15px;background:#e6e6e6;"></div>
<div class="a" style="left:0px;top:212px;width:18px;height:461px;background:#e6e6e6;"></div>
<div class="a" style="left:352px;top:197px;width:110px;height:15px;background:#d2d2d2;"></div>
<div class="a" style="left:0px;top:621px;width:17px;height:16px;background:#d2d2d2;"></div>
<div class="a" style="left:129px;top:197px;width:1px;height:15px;background:#c6c6c6;"></div>
<div class="a" style="left:240px;top:197px;width:1px;height:15px;background:#c6c6c6;"></div>
<div class="a" style="left:351px;top:197px;width:1px;height:15px;background:#c6c6c6;"></div>
<div class="a" style="left:462px;top:197px;width:1px;height:15px;background:#c6c6c6;"></div>
<div class="a" style="left:573px;top:197px;width:1px;height:15px;background:#c6c6c6;"></div>
<div class="a" style="left:684px;top:197px;width:1px;height:15px;background:#c6c6c6;"></div>
<div class="a" style="left:795px;top:197px;width:1px;height:15px;background:#c6c6c6;"></div>
<div class="a" style="left:906px;top:197px;width:1px;height:15px;background:#c6c6c6;"></div>
<div class="a" style="left:1017px;top:197px;width:1px;height:15px;background:#c6c6c6;"></div>
<div class="a" style="left:1128px;top:197px;width:1px;height:15px;background:#c6c6c6;"></div>
<div class="a" style="left:1239px;top:197px;width:1px;height:15px;background:#c6c6c6;"></div>
<div class="a" style="left:1293px;top:197px;width:1px;height:15px;background:#c6c6c6;"></div>
<div class="a" style="left:0px;top:212px;width:1340px;height:1px;background:#9e9e9e;"></div>
<div class="a" style="left:18px;top:197px;width:1px;height:476px;background:#9e9e9e;"></div>
<svg style="left:0px;top:197px" width="18" height="15" viewBox="0 0 18 15"><path d="M15 4 L15 12 L7 12 Z" fill="#b6b6b6"/></svg>
<div class="a" style="left:351px;top:211px;width:112px;height:2px;background:#217346;"></div>
<div class="a" style="left:17px;top:620px;width:2px;height:18px;background:#217346;"></div>
<div class="a" style="left:0px;top:229px;width:18px;height:1px;background:#c6c6c6;"></div>
<div class="a" style="left:0px;top:246px;width:18px;height:1px;background:#c6c6c6;"></div>
<div class="a" style="left:0px;top:263px;width:18px;height:1px;background:#c6c6c6;"></div>
<div class="a" style="left:0px;top:280px;width:18px;height:1px;background:#c6c6c6;"></div>
<div class="a" style="left:0px;top:297px;width:18px;height:1px;background:#c6c6c6;"></div>
<div class="a" style="left:0px;top:314px;width:18px;height:1px;background:#c6c6c6;"></div>
<div class="a" style="left:0px;top:331px;width:18px;height:1px;background:#c6c6c6;"></div>
<div class="a" style="left:0px;top:382px;width:18px;height:1px;background:#c6c6c6;"></div>
<div class="a" style="left:0px;top:399px;width:18px;height:1px;background:#c6c6c6;"></div>
<div class="a" style="left:0px;top:416px;width:18px;height:1px;background:#c6c6c6;"></div>
<div class="a" style="left:0px;top:433px;width:18px;height:1px;background:#c6c6c6;"></div>
<div class="a" style="left:0px;top:450px;width:18px;height:1px;background:#c6c6c6;"></div>
<div class="a" style="left:0px;top:467px;width:18px;height:1px;background:#c6c6c6;"></div>
<div class="a" style="left:0px;top:484px;width:18px;height:1px;background:#c6c6c6;"></div>
<div class="a" style="left:0px;top:501px;width:18px;height:1px;background:#c6c6c6;"></div>
<div class="a" style="left:0px;top:518px;width:18px;height:1px;background:#c6c6c6;"></div>
<div class="a" style="left:0px;top:535px;width:18px;height:1px;background:#c6c6c6;"></div>
<div class="a" style="left:0px;top:552px;width:18px;height:1px;background:#c6c6c6;"></div>
<div class="a" style="left:0px;top:569px;width:18px;height:1px;background:#c6c6c6;"></div>
<div class="a" style="left:0px;top:586px;width:18px;height:1px;background:#c6c6c6;"></div>
<div class="a" style="left:0px;top:603px;width:18px;height:1px;background:#c6c6c6;"></div>
<div class="a" style="left:0px;top:620px;width:18px;height:1px;background:#c6c6c6;"></div>
<div class="a" style="left:0px;top:637px;width:18px;height:1px;background:#c6c6c6;"></div>
<div class="a" style="left:0px;top:654px;width:18px;height:1px;background:#c6c6c6;"></div>
<div class="a" style="left:0px;top:671px;width:18px;height:1px;background:#c6c6c6;"></div>
<div class="a" style="left:19px;top:229px;width:1321px;height:1px;background:#d4d4d4;"></div>
<div class="a" style="left:19px;top:246px;width:1321px;height:1px;background:#d4d4d4;"></div>
<div class="a" style="left:19px;top:263px;width:1321px;height:1px;background:#d4d4d4;"></div>
<div class="a" style="left:19px;top:280px;width:1321px;height:1px;background:#d4d4d4;"></div>
<div class="a" style="left:19px;top:297px;width:1321px;height:1px;background:#d4d4d4;"></div>
<div class="a" style="left:19px;top:314px;width:1321px;height:1px;background:#d4d4d4;"></div>
<div class="a" style="left:19px;top:331px;width:1321px;height:1px;background:#d4d4d4;"></div>
<div class="a" style="left:19px;top:382px;width:1321px;height:1px;background:#d4d4d4;"></div>
<div class="a" style="left:19px;top:399px;width:1321px;height:1px;background:#d4d4d4;"></div>
<div class="a" style="left:19px;top:416px;width:1321px;height:1px;background:#d4d4d4;"></div>
<div class="a" style="left:19px;top:433px;width:1321px;height:1px;background:#d4d4d4;"></div>
<div class="a" style="left:19px;top:450px;width:1321px;height:1px;background:#d4d4d4;"></div>
<div class="a" style="left:19px;top:467px;width:1321px;height:1px;background:#d4d4d4;"></div>
<div class="a" style="left:19px;top:484px;width:1321px;height:1px;background:#d4d4d4;"></div>
<div class="a" style="left:19px;top:501px;width:1321px;height:1px;background:#d4d4d4;"></div>
<div class="a" style="left:19px;top:518px;width:1321px;height:1px;background:#d4d4d4;"></div>
<div class="a" style="left:19px;top:535px;width:1321px;height:1px;background:#d4d4d4;"></div>
<div class="a" style="left:19px;top:552px;width:1321px;height:1px;background:#d4d4d4;"></div>
<div class="a" style="left:19px;top:569px;width:1321px;height:1px;background:#d4d4d4;"></div>
<div class="a" style="left:19px;top:586px;width:1321px;height:1px;background:#d4d4d4;"></div>
<div class="a" style="left:19px;top:603px;width:1321px;height:1px;background:#d4d4d4;"></div>
<div class="a" style="left:19px;top:620px;width:1321px;height:1px;background:#d4d4d4;"></div>
<div class="a" style="left:19px;top:637px;width:1321px;height:1px;background:#d4d4d4;"></div>
<div class="a" style="left:19px;top:654px;width:1321px;height:1px;background:#d4d4d4;"></div>
<div class="a" style="left:19px;top:671px;width:1321px;height:1px;background:#d4d4d4;"></div>
<div class="a" style="left:1239px;top:213px;width:1px;height:16px;background:#d4d4d4;"></div>
<div class="a" style="left:1293px;top:213px;width:1px;height:16px;background:#d4d4d4;"></div>
<div class="a" style="left:129px;top:230px;width:1px;height:16px;background:#d4d4d4;"></div>
<div class="a" style="left:240px;top:230px;width:1px;height:16px;background:#d4d4d4;"></div>
<div class="a" style="left:351px;top:230px;width:1px;height:16px;background:#d4d4d4;"></div>
<div class="a" style="left:462px;top:230px;width:1px;height:16px;background:#d4d4d4;"></div>
<div class="a" style="left:573px;top:230px;width:1px;height:16px;background:#d4d4d4;"></div>
<div class="a" style="left:684px;top:230px;width:1px;height:16px;background:#d4d4d4;"></div>
<div class="a" style="left:795px;top:230px;width:1px;height:16px;background:#d4d4d4;"></div>
<div class="a" style="left:906px;top:230px;width:1px;height:16px;background:#d4d4d4;"></div>
<div class="a" style="left:1017px;top:230px;width:1px;height:16px;background:#d4d4d4;"></div>
<div class="a" style="left:1128px;top:230px;width:1px;height:16px;background:#d4d4d4;"></div>
<div class="a" style="left:1239px;top:230px;width:1px;height:16px;background:#d4d4d4;"></div>
<div class="a" style="left:1293px;top:230px;width:1px;height:16px;background:#d4d4d4;"></div>
<div class="a" style="left:1239px;top:247px;width:1px;height:16px;background:#d4d4d4;"></div>
<div class="a" style="left:1293px;top:247px;width:1px;height:16px;background:#d4d4d4;"></div>
<div class="a" style="left:129px;top:264px;width:1px;height:16px;background:#d4d4d4;"></div>
<div class="a" style="left:240px;top:264px;width:1px;height:16px;background:#d4d4d4;"></div>
<div class="a" style="left:351px;top:264px;width:1px;height:16px;background:#d4d4d4;"></div>
<div class="a" style="left:462px;top:264px;width:1px;height:16px;background:#d4d4d4;"></div>
<div class="a" style="left:573px;top:264px;width:1px;height:16px;background:#d4d4d4;"></div>
<div class="a" style="left:684px;top:264px;width:1px;height:16px;background:#d4d4d4;"></div>
<div class="a" style="left:795px;top:264px;width:1px;height:16px;background:#d4d4d4;"></div>
<div class="a" style="left:906px;top:264px;width:1px;height:16px;background:#d4d4d4;"></div>
<div class="a" style="left:1017px;top:264px;width:1px;height:16px;background:#d4d4d4;"></div>
<div class="a" style="left:1128px;top:264px;width:1px;height:16px;background:#d4d4d4;"></div>
<div class="a" style="left:1239px;top:264px;width:1px;height:16px;background:#d4d4d4;"></div>
<div class="a" style="left:1293px;top:264px;width:1px;height:16px;background:#d4d4d4;"></div>
<div class="a" style="left:351px;top:281px;width:1px;height:16px;background:#d4d4d4;"></div>
<div class="a" style="left:462px;top:281px;width:1px;height:16px;background:#d4d4d4;"></div>
<div class="a" style="left:573px;top:281px;width:1px;height:16px;background:#d4d4d4;"></div>
<div class="a" style="left:684px;top:281px;width:1px;height:16px;background:#d4d4d4;"></div>
<div class="a" style="left:795px;top:281px;width:1px;height:16px;background:#d4d4d4;"></div>
<div class="a" style="left:906px;top:281px;width:1px;height:16px;background:#d4d4d4;"></div>
<div class="a" style="left:1017px;top:281px;width:1px;height:16px;background:#d4d4d4;"></div>
<div class="a" style="left:1128px;top:281px;width:1px;height:16px;background:#d4d4d4;"></div>
<div class="a" style="left:1239px;top:281px;width:1px;height:16px;background:#d4d4d4;"></div>
<div class="a" style="left:1293px;top:281px;width:1px;height:16px;background:#d4d4d4;"></div>
<div class="a" style="left:129px;top:298px;width:1px;height:16px;background:#d4d4d4;"></div>
<div class="a" style="left:240px;top:298px;width:1px;height:16px;background:#d4d4d4;"></div>
<div class="a" style="left:351px;top:298px;width:1px;height:16px;background:#d4d4d4;"></div>
<div class="a" style="left:462px;top:298px;width:1px;height:16px;background:#d4d4d4;"></div>
<div class="a" style="left:573px;top:298px;width:1px;height:16px;background:#d4d4d4;"></div>
<div class="a" style="left:684px;top:298px;width:1px;height:16px;background:#d4d4d4;"></div>
<div class="a" style="left:795px;top:298px;width:1px;height:16px;background:#d4d4d4;"></div>
<div class="a" style="left:906px;top:298px;width:1px;height:16px;background:#d4d4d4;"></div>
<div class="a" style="left:1017px;top:298px;width:1px;height:16px;background:#d4d4d4;"></div>
<div class="a" style="left:1128px;top:298px;width:1px;height:16px;background:#d4d4d4;"></div>
<div class="a" style="left:1239px;top:298px;width:1px;height:16px;background:#d4d4d4;"></div>
<div class="a" style="left:1293px;top:298px;width:1px;height:16px;background:#d4d4d4;"></div>
<div class="a" style="left:129px;top:315px;width:1px;height:16px;background:#d4d4d4;"></div>
<div class="a" style="left:1017px;top:315px;width:1px;height:16px;background:#d4d4d4;"></div>
<div class="a" style="left:1239px;top:315px;width:1px;height:16px;background:#d4d4d4;"></div>
<div class="a" style="left:1293px;top:315px;width:1px;height:16px;background:#d4d4d4;"></div>
<div class="a" style="left:129px;top:332px;width:1px;height:50px;background:#d4d4d4;"></div>
<div class="a" style="left:240px;top:332px;width:1px;height:50px;background:#d4d4d4;"></div>
<div class="a" style="left:351px;top:332px;width:1px;height:50px;background:#d4d4d4;"></div>
<div class="a" style="left:462px;top:332px;width:1px;height:50px;background:#d4d4d4;"></div>
<div class="a" style="left:573px;top:332px;width:1px;height:50px;background:#d4d4d4;"></div>
<div class="a" style="left:684px;top:332px;width:1px;height:50px;background:#d4d4d4;"></div>
<div class="a" style="left:795px;top:332px;width:1px;height:50px;background:#d4d4d4;"></div>
<div class="a" style="left:906px;top:332px;width:1px;height:50px;background:#d4d4d4;"></div>
<div class="a" style="left:1017px;top:332px;width:1px;height:50px;background:#d4d4d4;"></div>
<div class="a" style="left:1128px;top:332px;width:1px;height:50px;background:#d4d4d4;"></div>
<div class="a" style="left:1239px;top:332px;width:1px;height:50px;background:#d4d4d4;"></div>
<div class="a" style="left:1293px;top:332px;width:1px;height:50px;background:#d4d4d4;"></div>
<div class="a" style="left:129px;top:383px;width:1px;height:16px;background:#d4d4d4;"></div>
<div class="a" style="left:240px;top:383px;width:1px;height:16px;background:#d4d4d4;"></div>
<div class="a" style="left:351px;top:383px;width:1px;height:16px;background:#d4d4d4;"></div>
<div class="a" style="left:462px;top:383px;width:1px;height:16px;background:#d4d4d4;"></div>
<div class="a" style="left:573px;top:383px;width:1px;height:16px;background:#d4d4d4;"></div>
<div class="a" style="left:684px;top:383px;width:1px;height:16px;background:#d4d4d4;"></div>
<div class="a" style="left:795px;top:383px;width:1px;height:16px;background:#d4d4d4;"></div>
<div class="a" style="left:906px;top:383px;width:1px;height:16px;background:#d4d4d4;"></div>
<div class="a" style="left:1017px;top:383px;width:1px;height:16px;background:#d4d4d4;"></div>
<div class="a" style="left:1128px;top:383px;width:1px;height:16px;background:#d4d4d4;"></div>
<div class="a" style="left:1239px;top:383px;width:1px;height:16px;background:#d4d4d4;"></div>
<div class="a" style="left:1293px;top:383px;width:1px;height:16px;background:#d4d4d4;"></div>
<div class="a" style="left:129px;top:400px;width:1px;height:16px;background:#d4d4d4;"></div>
<div class="a" style="left:240px;top:400px;width:1px;height:16px;background:#d4d4d4;"></div>
<div class="a" style="left:351px;top:400px;width:1px;height:16px;background:#d4d4d4;"></div>
<div class="a" style="left:462px;top:400px;width:1px;height:16px;background:#d4d4d4;"></div>
<div class="a" style="left:573px;top:400px;width:1px;height:16px;background:#d4d4d4;"></div>
<div class="a" style="left:684px;top:400px;width:1px;height:16px;background:#d4d4d4;"></div>
<div class="a" style="left:795px;top:400px;width:1px;height:16px;background:#d4d4d4;"></div>
<div class="a" style="left:906px;top:400px;width:1px;height:16px;background:#d4d4d4;"></div>
<div class="a" style="left:1017px;top:400px;width:1px;height:16px;background:#d4d4d4;"></div>
<div class="a" style="left:1128px;top:400px;width:1px;height:16px;background:#d4d4d4;"></div>
<div class="a" style="left:1239px;top:400px;width:1px;height:16px;background:#d4d4d4;"></div>
<div class="a" style="left:1293px;top:400px;width:1px;height:16px;background:#d4d4d4;"></div>
<div class="a" style="left:129px;top:417px;width:1px;height:16px;background:#d4d4d4;"></div>
<div class="a" style="left:240px;top:417px;width:1px;height:16px;background:#d4d4d4;"></div>
<div class="a" style="left:351px;top:417px;width:1px;height:16px;background:#d4d4d4;"></div>
<div class="a" style="left:462px;top:417px;width:1px;height:16px;background:#d4d4d4;"></div>
<div class="a" style="left:573px;top:417px;width:1px;height:16px;background:#d4d4d4;"></div>
<div class="a" style="left:684px;top:417px;width:1px;height:16px;background:#d4d4d4;"></div>
<div class="a" style="left:795px;top:417px;width:1px;height:16px;background:#d4d4d4;"></div>
<div class="a" style="left:906px;top:417px;width:1px;height:16px;background:#d4d4d4;"></div>
<div class="a" style="left:1017px;top:417px;width:1px;height:16px;background:#d4d4d4;"></div>
<div class="a" style="left:1128px;top:417px;width:1px;height:16px;background:#d4d4d4;"></div>
<div class="a" style="left:1239px;top:417px;width:1px;height:16px;background:#d4d4d4;"></div>
<div class="a" style="left:1293px;top:417px;width:1px;height:16px;background:#d4d4d4;"></div>
<div class="a" style="left:129px;top:434px;width:1px;height:16px;background:#d4d4d4;"></div>
<div class="a" style="left:240px;top:434px;width:1px;height:16px;background:#d4d4d4;"></div>
<div class="a" style="left:351px;top:434px;width:1px;height:16px;background:#d4d4d4;"></div>
<div class="a" style="left:462px;top:434px;width:1px;height:16px;background:#d4d4d4;"></div>
<div class="a" style="left:573px;top:434px;width:1px;height:16px;background:#d4d4d4;"></div>
<div class="a" style="left:684px;top:434px;width:1px;height:16px;background:#d4d4d4;"></div>
<div class="a" style="left:795px;top:434px;width:1px;height:16px;background:#d4d4d4;"></div>
<div class="a" style="left:906px;top:434px;width:1px;height:16px;background:#d4d4d4;"></div>
<div class="a" style="left:1017px;top:434px;width:1px;height:16px;background:#d4d4d4;"></div>
<div class="a" style="left:1128px;top:434px;width:1px;height:16px;background:#d4d4d4;"></div>
<div class="a" style="left:1239px;top:434px;width:1px;height:16px;background:#d4d4d4;"></div>
<div class="a" style="left:1293px;top:434px;width:1px;height:16px;background:#d4d4d4;"></div>
<div class="a" style="left:129px;top:451px;width:1px;height:16px;background:#d4d4d4;"></div>
<div class="a" style="left:240px;top:451px;width:1px;height:16px;background:#d4d4d4;"></div>
<div class="a" style="left:351px;top:451px;width:1px;height:16px;background:#d4d4d4;"></div>
<div class="a" style="left:462px;top:451px;width:1px;height:16px;background:#d4d4d4;"></div>
<div class="a" style="left:573px;top:451px;width:1px;height:16px;background:#d4d4d4;"></div>
<div class="a" style="left:684px;top:451px;width:1px;height:16px;background:#d4d4d4;"></div>
<div class="a" style="left:795px;top:451px;width:1px;height:16px;background:#d4d4d4;"></div>
<div class="a" style="left:906px;top:451px;width:1px;height:16px;background:#d4d4d4;"></div>
<div class="a" style="left:1017px;top:451px;width:1px;height:16px;background:#d4d4d4;"></div>
<div class="a" style="left:1128px;top:451px;width:1px;height:16px;background:#d4d4d4;"></div>
<div class="a" style="left:1239px;top:451px;width:1px;height:16px;background:#d4d4d4;"></div>
<div class="a" style="left:1293px;top:451px;width:1px;height:16px;background:#d4d4d4;"></div>
<div class="a" style="left:129px;top:468px;width:1px;height:16px;background:#d4d4d4;"></div>
<div class="a" style="left:240px;top:468px;width:1px;height:16px;background:#d4d4d4;"></div>
<div class="a" style="left:351px;top:468px;width:1px;height:16px;background:#d4d4d4;"></div>
<div class="a" style="left:462px;top:468px;width:1px;height:16px;background:#d4d4d4;"></div>
<div class="a" style="left:573px;top:468px;width:1px;height:16px;background:#d4d4d4;"></div>
<div class="a" style="left:684px;top:468px;width:1px;height:16px;background:#d4d4d4;"></div>
<div class="a" style="left:795px;top:468px;width:1px;height:16px;background:#d4d4d4;"></div>
<div class="a" style="left:906px;top:468px;width:1px;height:16px;background:#d4d4d4;"></div>
<div class="a" style="left:1017px;top:468px;width:1px;height:16px;background:#d4d4d4;"></div>
<div class="a" style="left:1128px;top:468px;width:1px;height:16px;background:#d4d4d4;"></div>
<div class="a" style="left:1239px;top:468px;width:1px;height:16px;background:#d4d4d4;"></div>
<div class="a" style="left:1293px;top:468px;width:1px;height:16px;background:#d4d4d4;"></div>
<div class="a" style="left:129px;top:485px;width:1px;height:16px;background:#d4d4d4;"></div>
<div class="a" style="left:240px;top:485px;width:1px;height:16px;background:#d4d4d4;"></div>
<div class="a" style="left:351px;top:485px;width:1px;height:16px;background:#d4d4d4;"></div>
<div class="a" style="left:462px;top:485px;width:1px;height:16px;background:#d4d4d4;"></div>
<div class="a" style="left:573px;top:485px;width:1px;height:16px;background:#d4d4d4;"></div>
<div class="a" style="left:684px;top:485px;width:1px;height:16px;background:#d4d4d4;"></div>
<div class="a" style="left:795px;top:485px;width:1px;height:16px;background:#d4d4d4;"></div>
<div class="a" style="left:906px;top:485px;width:1px;height:16px;background:#d4d4d4;"></div>
<div class="a" style="left:1017px;top:485px;width:1px;height:16px;background:#d4d4d4;"></div>
<div class="a" style="left:1128px;top:485px;width:1px;height:16px;background:#d4d4d4;"></div>
<div class="a" style="left:1239px;top:485px;width:1px;height:16px;background:#d4d4d4;"></div>
<div class="a" style="left:1293px;top:485px;width:1px;height:16px;background:#d4d4d4;"></div>
<div class="a" style="left:129px;top:502px;width:1px;height:16px;background:#d4d4d4;"></div>
<div class="a" style="left:240px;top:502px;width:1px;height:16px;background:#d4d4d4;"></div>
<div class="a" style="left:351px;top:502px;width:1px;height:16px;background:#d4d4d4;"></div>
<div class="a" style="left:462px;top:502px;width:1px;height:16px;background:#d4d4d4;"></div>
<div class="a" style="left:573px;top:502px;width:1px;height:16px;background:#d4d4d4;"></div>
<div class="a" style="left:684px;top:502px;width:1px;height:16px;background:#d4d4d4;"></div>
<div class="a" style="left:795px;top:502px;width:1px;height:16px;background:#d4d4d4;"></div>
<div class="a" style="left:906px;top:502px;width:1px;height:16px;background:#d4d4d4;"></div>
<div class="a" style="left:1017px;top:502px;width:1px;height:16px;background:#d4d4d4;"></div>
<div class="a" style="left:1128px;top:502px;width:1px;height:16px;background:#d4d4d4;"></div>
<div class="a" style="left:1239px;top:502px;width:1px;height:16px;background:#d4d4d4;"></div>
<div class="a" style="left:1293px;top:502px;width:1px;height:16px;background:#d4d4d4;"></div>
<div class="a" style="left:129px;top:519px;width:1px;height:16px;background:#d4d4d4;"></div>
<div class="a" style="left:240px;top:519px;width:1px;height:16px;background:#d4d4d4;"></div>
<div class="a" style="left:351px;top:519px;width:1px;height:16px;background:#d4d4d4;"></div>
<div class="a" style="left:462px;top:519px;width:1px;height:16px;background:#d4d4d4;"></div>
<div class="a" style="left:573px;top:519px;width:1px;height:16px;background:#d4d4d4;"></div>
<div class="a" style="left:684px;top:519px;width:1px;height:16px;background:#d4d4d4;"></div>
<div class="a" style="left:795px;top:519px;width:1px;height:16px;background:#d4d4d4;"></div>
<div class="a" style="left:906px;top:519px;width:1px;height:16px;background:#d4d4d4;"></div>
<div class="a" style="left:1017px;top:519px;width:1px;height:16px;background:#d4d4d4;"></div>
<div class="a" style="left:1128px;top:519px;width:1px;height:16px;background:#d4d4d4;"></div>
<div class="a" style="left:1239px;top:519px;width:1px;height:16px;background:#d4d4d4;"></div>
<div class="a" style="left:1293px;top:519px;width:1px;height:16px;background:#d4d4d4;"></div>
<div class="a" style="left:129px;top:536px;width:1px;height:16px;background:#d4d4d4;"></div>
<div class="a" style="left:240px;top:536px;width:1px;height:16px;background:#d4d4d4;"></div>
<div class="a" style="left:351px;top:536px;width:1px;height:16px;background:#d4d4d4;"></div>
<div class="a" style="left:462px;top:536px;width:1px;height:16px;background:#d4d4d4;"></div>
<div class="a" style="left:573px;top:536px;width:1px;height:16px;background:#d4d4d4;"></div>
<div class="a" style="left:684px;top:536px;width:1px;height:16px;background:#d4d4d4;"></div>
<div class="a" style="left:795px;top:536px;width:1px;height:16px;background:#d4d4d4;"></div>
<div class="a" style="left:906px;top:536px;width:1px;height:16px;background:#d4d4d4;"></div>
<div class="a" style="left:1017px;top:536px;width:1px;height:16px;background:#d4d4d4;"></div>
<div class="a" style="left:1128px;top:536px;width:1px;height:16px;background:#d4d4d4;"></div>
<div class="a" style="left:1239px;top:536px;width:1px;height:16px;background:#d4d4d4;"></div>
<div class="a" style="left:1293px;top:536px;width:1px;height:16px;background:#d4d4d4;"></div>
<div class="a" style="left:129px;top:553px;width:1px;height:16px;background:#d4d4d4;"></div>
<div class="a" style="left:240px;top:553px;width:1px;height:16px;background:#d4d4d4;"></div>
<div class="a" style="left:351px;top:553px;width:1px;height:16px;background:#d4d4d4;"></div>
<div class="a" style="left:462px;top:553px;width:1px;height:16px;background:#d4d4d4;"></div>
<div class="a" style="left:573px;top:553px;width:1px;height:16px;background:#d4d4d4;"></div>
<div class="a" style="left:684px;top:553px;width:1px;height:16px;background:#d4d4d4;"></div>
<div class="a" style="left:795px;top:553px;width:1px;height:16px;background:#d4d4d4;"></div>
<div class="a" style="left:906px;top:553px;width:1px;height:16px;background:#d4d4d4;"></div>
<div class="a" style="left:1017px;top:553px;width:1px;height:16px;background:#d4d4d4;"></div>
<div class="a" style="left:1128px;top:553px;width:1px;height:16px;background:#d4d4d4;"></div>
<div class="a" style="left:1239px;top:553px;width:1px;height:16px;background:#d4d4d4;"></div>
<div class="a" style="left:1293px;top:553px;width:1px;height:16px;background:#d4d4d4;"></div>
<div class="a" style="left:129px;top:570px;width:1px;height:16px;background:#d4d4d4;"></div>
<div class="a" style="left:240px;top:570px;width:1px;height:16px;background:#d4d4d4;"></div>
<div class="a" style="left:351px;top:570px;width:1px;height:16px;background:#d4d4d4;"></div>
<div class="a" style="left:462px;top:570px;width:1px;height:16px;background:#d4d4d4;"></div>
<div class="a" style="left:573px;top:570px;width:1px;height:16px;background:#d4d4d4;"></div>
<div class="a" style="left:684px;top:570px;width:1px;height:16px;background:#d4d4d4;"></div>
<div class="a" style="left:795px;top:570px;width:1px;height:16px;background:#d4d4d4;"></div>
<div class="a" style="left:906px;top:570px;width:1px;height:16px;background:#d4d4d4;"></div>
<div class="a" style="left:1017px;top:570px;width:1px;height:16px;background:#d4d4d4;"></div>
<div class="a" style="left:1128px;top:570px;width:1px;height:16px;background:#d4d4d4;"></div>
<div class="a" style="left:1239px;top:570px;width:1px;height:16px;background:#d4d4d4;"></div>
<div class="a" style="left:1293px;top:570px;width:1px;height:16px;background:#d4d4d4;"></div>
<div class="a" style="left:129px;top:587px;width:1px;height:16px;background:#d4d4d4;"></div>
<div class="a" style="left:240px;top:587px;width:1px;height:16px;background:#d4d4d4;"></div>
<div class="a" style="left:351px;top:587px;width:1px;height:16px;background:#d4d4d4;"></div>
<div class="a" style="left:462px;top:587px;width:1px;height:16px;background:#d4d4d4;"></div>
<div class="a" style="left:573px;top:587px;width:1px;height:16px;background:#d4d4d4;"></div>
<div class="a" style="left:684px;top:587px;width:1px;height:16px;background:#d4d4d4;"></div>
<div class="a" style="left:795px;top:587px;width:1px;height:16px;background:#d4d4d4;"></div>
<div class="a" style="left:906px;top:587px;width:1px;height:16px;background:#d4d4d4;"></div>
<div class="a" style="left:1017px;top:587px;width:1px;height:16px;background:#d4d4d4;"></div>
<div class="a" style="left:1128px;top:587px;width:1px;height:16px;background:#d4d4d4;"></div>
<div class="a" style="left:1239px;top:587px;width:1px;height:16px;background:#d4d4d4;"></div>
<div class="a" style="left:1293px;top:587px;width:1px;height:16px;background:#d4d4d4;"></div>
<div class="a" style="left:129px;top:604px;width:1px;height:16px;background:#d4d4d4;"></div>
<div class="a" style="left:240px;top:604px;width:1px;height:16px;background:#d4d4d4;"></div>
<div class="a" style="left:351px;top:604px;width:1px;height:16px;background:#d4d4d4;"></div>
<div class="a" style="left:462px;top:604px;width:1px;height:16px;background:#d4d4d4;"></div>
<div class="a" style="left:573px;top:604px;width:1px;height:16px;background:#d4d4d4;"></div>
<div class="a" style="left:684px;top:604px;width:1px;height:16px;background:#d4d4d4;"></div>
<div class="a" style="left:795px;top:604px;width:1px;height:16px;background:#d4d4d4;"></div>
<div class="a" style="left:906px;top:604px;width:1px;height:16px;background:#d4d4d4;"></div>
<div class="a" style="left:1017px;top:604px;width:1px;height:16px;background:#d4d4d4;"></div>
<div class="a" style="left:1128px;top:604px;width:1px;height:16px;background:#d4d4d4;"></div>
<div class="a" style="left:1239px;top:604px;width:1px;height:16px;background:#d4d4d4;"></div>
<div class="a" style="left:1293px;top:604px;width:1px;height:16px;background:#d4d4d4;"></div>
<div class="a" style="left:129px;top:621px;width:1px;height:16px;background:#d4d4d4;"></div>
<div class="a" style="left:240px;top:621px;width:1px;height:16px;background:#d4d4d4;"></div>
<div class="a" style="left:351px;top:621px;width:1px;height:16px;background:#d4d4d4;"></div>
<div class="a" style="left:462px;top:621px;width:1px;height:16px;background:#d4d4d4;"></div>
<div class="a" style="left:573px;top:621px;width:1px;height:16px;background:#d4d4d4;"></div>
<div class="a" style="left:684px;top:621px;width:1px;height:16px;background:#d4d4d4;"></div>
<div class="a" style="left:795px;top:621px;width:1px;height:16px;background:#d4d4d4;"></div>
<div class="a" style="left:906px;top:621px;width:1px;height:16px;background:#d4d4d4;"></div>
<div class="a" style="left:1017px;top:621px;width:1px;height:16px;background:#d4d4d4;"></div>
<div class="a" style="left:1128px;top:621px;width:1px;height:16px;background:#d4d4d4;"></div>
<div class="a" style="left:1239px;top:621px;width:1px;height:16px;background:#d4d4d4;"></div>
<div class="a" style="left:1293px;top:621px;width:1px;height:16px;background:#d4d4d4;"></div>
<div class="a" style="left:129px;top:638px;width:1px;height:16px;background:#d4d4d4;"></div>
<div class="a" style="left:240px;top:638px;width:1px;height:16px;background:#d4d4d4;"></div>
<div class="a" style="left:351px;top:638px;width:1px;height:16px;background:#d4d4d4;"></div>
<div class="a" style="left:462px;top:638px;width:1px;height:16px;background:#d4d4d4;"></div>
<div class="a" style="left:573px;top:638px;width:1px;height:16px;background:#d4d4d4;"></div>
<div class="a" style="left:684px;top:638px;width:1px;height:16px;background:#d4d4d4;"></div>
<div class="a" style="left:795px;top:638px;width:1px;height:16px;background:#d4d4d4;"></div>
<div class="a" style="left:906px;top:638px;width:1px;height:16px;background:#d4d4d4;"></div>
<div class="a" style="left:1017px;top:638px;width:1px;height:16px;background:#d4d4d4;"></div>
<div class="a" style="left:1128px;top:638px;width:1px;height:16px;background:#d4d4d4;"></div>
<div class="a" style="left:1239px;top:638px;width:1px;height:16px;background:#d4d4d4;"></div>
<div class="a" style="left:1293px;top:638px;width:1px;height:16px;background:#d4d4d4;"></div>
<div class="a" style="left:129px;top:655px;width:1px;height:16px;background:#d4d4d4;"></div>
<div class="a" style="left:240px;top:655px;width:1px;height:16px;background:#d4d4d4;"></div>
<div class="a" style="left:351px;top:655px;width:1px;height:16px;background:#d4d4d4;"></div>
<div class="a" style="left:462px;top:655px;width:1px;height:16px;background:#d4d4d4;"></div>
<div class="a" style="left:573px;top:655px;width:1px;height:16px;background:#d4d4d4;"></div>
<div class="a" style="left:684px;top:655px;width:1px;height:16px;background:#d4d4d4;"></div>
<div class="a" style="left:795px;top:655px;width:1px;height:16px;background:#d4d4d4;"></div>
<div class="a" style="left:906px;top:655px;width:1px;height:16px;background:#d4d4d4;"></div>
<div class="a" style="left:1017px;top:655px;width:1px;height:16px;background:#d4d4d4;"></div>
<div class="a" style="left:1128px;top:655px;width:1px;height:16px;background:#d4d4d4;"></div>
<div class="a" style="left:1239px;top:655px;width:1px;height:16px;background:#d4d4d4;"></div>
<div class="a" style="left:1293px;top:655px;width:1px;height:16px;background:#d4d4d4;"></div>
<div class="a" style="left:1340px;top:212px;width:1px;height:461px;background:#a6a6a6;"></div>
<div class="a" style="left:0px;top:672px;width:1341px;height:1px;background:#9e9e9e;"></div>
<div class="a" style="left:97px;top:672px;width:79px;height:1px;background:#fff;"></div>
<div class="t" style="left:44.0px;width:60px;text-align:center;top:197px;font-size:11px;line-height:14px;color:#262626">A</div>
<div class="t" style="left:155.0px;width:60px;text-align:center;top:197px;font-size:11px;line-height:14px;color:#262626">B</div>
<div class="t" style="left:266.0px;width:60px;text-align:center;top:197px;font-size:11px;line-height:14px;color:#262626">C</div>
<div class="t" style="left:377.0px;width:60px;text-align:center;top:197px;font-size:11px;line-height:14px;color:#1a5c36">D</div>
<div class="t" style="left:488.0px;width:60px;text-align:center;top:197px;font-size:11px;line-height:14px;color:#262626">E</div>
<div class="t" style="left:599.0px;width:60px;text-align:center;top:197px;font-size:11px;line-height:14px;color:#262626">F</div>
<div class="t" style="left:710.0px;width:60px;text-align:center;top:197px;font-size:11px;line-height:14px;color:#262626">G</div>
<div class="t" style="left:821.0px;width:60px;text-align:center;top:197px;font-size:11px;line-height:14px;color:#262626">H</div>
<div class="t" style="left:932.0px;width:60px;text-align:center;top:197px;font-size:11px;line-height:14px;color:#262626">I</div>
<div class="t" style="left:1043.0px;width:60px;text-align:center;top:197px;font-size:11px;line-height:14px;color:#262626">J</div>
<div class="t" style="left:1154.0px;width:60px;text-align:center;top:197px;font-size:11px;line-height:14px;color:#262626">K</div>
<div class="t" style="left:1236.5px;width:60px;text-align:center;top:197px;font-size:11px;line-height:14px;color:#262626">L</div>
<div class="t" style="left:1291px;width:60px;text-align:center;top:197px;font-size:11px;line-height:14px;color:#262626">M</div>
<div class="t" style="left:-20px;width:54px;text-align:center;top:215px;font-size:11px;line-height:14px;color:#262626">1</div>
<div class="t" style="left:-20px;width:54px;text-align:center;top:232px;font-size:11px;line-height:14px;color:#262626">2</div>
<div class="t" style="left:-20px;width:54px;text-align:center;top:249px;font-size:11px;line-height:14px;color:#262626">3</div>
<div class="t" style="left:-20px;width:54px;text-align:center;top:266px;font-size:11px;line-height:14px;color:#262626">4</div>
<div class="t" style="left:-20px;width:54px;text-align:center;top:283px;font-size:11px;line-height:14px;color:#262626">5</div>
<div class="t" style="left:-20px;width:54px;text-align:center;top:300px;font-size:11px;line-height:14px;color:#262626">6</div>
<div class="t" style="left:-20px;width:54px;text-align:center;top:317px;font-size:11px;line-height:14px;color:#262626">7</div>
<div class="t" style="left:-20px;width:54px;text-align:center;top:368px;font-size:11px;line-height:14px;color:#262626">8</div>
<div class="t" style="left:-20px;width:54px;text-align:center;top:385px;font-size:11px;line-height:14px;color:#262626">9</div>
<div class="t" style="left:-20px;width:54px;text-align:center;top:402px;font-size:11px;line-height:14px;color:#262626">10</div>
<div class="t" style="left:-20px;width:54px;text-align:center;top:419px;font-size:11px;line-height:14px;color:#262626">11</div>
<div class="t" style="left:-20px;width:54px;text-align:center;top:436px;font-size:11px;line-height:14px;color:#262626">12</div>
<div class="t" style="left:-20px;width:54px;text-align:center;top:453px;font-size:11px;line-height:14px;color:#262626">13</div>
<div class="t" style="left:-20px;width:54px;text-align:center;top:470px;font-size:11px;line-height:14px;color:#262626">14</div>
<div class="t" style="left:-20px;width:54px;text-align:center;top:487px;font-size:11px;line-height:14px;color:#262626">15</div>
<div class="t" style="left:-20px;width:54px;text-align:center;top:504px;font-size:11px;line-height:14px;color:#262626">16</div>
<div class="t" style="left:-20px;width:54px;text-align:center;top:521px;font-size:11px;line-height:14px;color:#262626">17</div>
<div class="t" style="left:-20px;width:54px;text-align:center;top:538px;font-size:11px;line-height:14px;color:#262626">18</div>
<div class="t" style="left:-20px;width:54px;text-align:center;top:555px;font-size:11px;line-height:14px;color:#262626">19</div>
<div class="t" style="left:-20px;width:54px;text-align:center;top:572px;font-size:11px;line-height:14px;color:#262626">20</div>
<div class="t" style="left:-20px;width:54px;text-align:center;top:589px;font-size:11px;line-height:14px;color:#262626">21</div>
<div class="t" style="left:-20px;width:54px;text-align:center;top:606px;font-size:11px;line-height:14px;color:#262626">22</div>
<div class="t" style="left:-20px;width:54px;text-align:center;top:623px;font-size:11px;line-height:14px;color:#1a5c36">23</div>
<div class="t" style="left:-20px;width:54px;text-align:center;top:640px;font-size:11px;line-height:14px;color:#262626">24</div>
<div class="t" style="left:-20px;width:54px;text-align:center;top:657px;font-size:11px;line-height:14px;color:#262626">25</div>
<div class="a" style="left:18px;top:280px;width:445px;height:1px;background:#000;"></div>
<div class="a" style="left:18px;top:297px;width:445px;height:1px;background:#000;"></div>
<div class="a" style="left:351px;top:280px;width:1px;height:18px;background:#000;"></div>
<div class="a" style="left:462px;top:280px;width:1px;height:18px;background:#000;"></div>
<div class="a" style="left:18px;top:331px;width:1222px;height:1px;background:#000;"></div>
<div class="a" style="left:18px;top:382px;width:1222px;height:1px;background:#000;"></div>
<div class="a" style="left:18px;top:399px;width:1222px;height:1px;background:#000;"></div>
<div class="a" style="left:129px;top:331px;width:1px;height:69px;background:#000;"></div>
<div class="a" style="left:240px;top:331px;width:1px;height:69px;background:#000;"></div>
<div class="a" style="left:351px;top:331px;width:1px;height:69px;background:#000;"></div>
<div class="a" style="left:462px;top:331px;width:1px;height:69px;background:#000;"></div>
<div class="a" style="left:573px;top:331px;width:1px;height:69px;background:#000;"></div>
<div class="a" style="left:684px;top:331px;width:1px;height:69px;background:#000;"></div>
<div class="a" style="left:795px;top:331px;width:1px;height:69px;background:#000;"></div>
<div class="a" style="left:906px;top:331px;width:1px;height:69px;background:#000;"></div>
<div class="a" style="left:1017px;top:331px;width:1px;height:69px;background:#000;"></div>
<div class="a" style="left:1128px;top:331px;width:1px;height:69px;background:#000;"></div>
<div class="a" style="left:1239px;top:331px;width:1px;height:69px;background:#000;"></div>
<div class="t" style="left:536px;top:215px;font-size:11.5px;letter-spacing:0.304px;">Como fazer uma planilha no Excel</div>
<div class="t" style="left:573px;top:249px;font-size:11.5px;letter-spacing:0.312px;">Churrasco da Vitória</div>
<div class="t" style="left:128px;top:283px;font-size:11.5px;letter-spacing:0.157px;">Taxa de Entrega p/Kg</div>
<div class="t" style="left:357px;top:283px;font-size:11.5px;letter-spacing:-0.203px;">R$</div>
<div class="t" style="left:434px;top:283px;font-size:11.5px;letter-spacing:0.047px;">0,10</div>
<div class="t" style="left:560px;top:317px;font-size:11.5px;letter-spacing:0.898px;">Itens</div>
<div class="t" style="left:1092px;top:317px;font-size:11.5px;letter-spacing:0.587px;">Participantes</div>
<div class="t" style="left:20px;top:368px;font-size:11.5px;letter-spacing:1.148px;">Itens</div>
<div class="t" style="left:159px;top:351px;font-size:11.5px;letter-spacing:-0.382px;">Preço (Kg)</div>
<div class="t" style="left:269px;top:351px;font-size:11.5px;letter-spacing:-0.056px;">Qtde. (Kg)</div>
<div class="t" style="left:381px;top:351px;font-size:11.5px;letter-spacing:0.186px;">Total (R$)</div>
<div class="t" style="left:482px;top:351px;font-size:11.5px;letter-spacing:0.080px;">Desconto (%)</div>
<div class="t" style="left:591px;top:351px;font-size:11.5px;letter-spacing:0.033px;">Desconto (R$)</div>
<div class="t" style="left:691px;top:342px;font-size:11.5px;letter-spacing:0.521px;">Total c/ Desconto</div>
<div class="t" style="left:728px;top:359px;font-size:11.5px;letter-spacing:-0.286px;">(R$)</div>
<div class="t" style="left:808px;top:342px;font-size:11.5px;letter-spacing:0.129px;">Taxa de Entrega</div>
<div class="t" style="left:841px;top:359px;font-size:11.5px;letter-spacing:-0.620px;">(R$)</div>
<div class="t" style="left:926px;top:351px;font-size:11.5px;letter-spacing:0.232px;">Subtotal (R$)</div>
<div class="t" style="left:1040px;top:342px;font-size:11.5px;letter-spacing:0.207px;">Qtde. (N) de</div>
<div class="t" style="left:1037px;top:359px;font-size:11.5px;letter-spacing:0.504px;">Participantes</div>
<div class="t" style="left:1146px;top:334px;font-size:11.5px;letter-spacing:0.036px;">Consumo (Kg)</div>
<div class="t" style="left:1156px;top:351px;font-size:11.5px;letter-spacing:0.674px;">Médio por</div>
<div class="t" style="left:1148px;top:368px;font-size:11.5px;letter-spacing:0.551px;">Participante.</div>
<div class="t" style="left:20px;top:385px;font-size:11.5px;letter-spacing:0.326px;">Picanha</div>
<div class="t" style="left:136px;top:385px;font-size:11.5px;letter-spacing:-1.203px;">R$</div>
<div class="t" style="left:206px;top:385px;font-size:11.5px;letter-spacing:-0.062px;">40,00</div>
<div class="t" style="left:242px;top:385px;font-size:11.5px;letter-spacing:0.164px;">150</div>
<div class="t" style="left:357px;top:385px;font-size:11.5px;letter-spacing:-0.203px;">R$</div>
<div class="t" style="left:413px;top:385px;font-size:11.5px;letter-spacing:-0.174px;">6.000,00</div>
<div class="t" style="left:465px;top:385px;font-size:11.5px;letter-spacing:-0.750px;">15%</div>
<div class="t" style="left:579px;top:385px;font-size:11.5px;letter-spacing:-0.203px;">R$</div>
<div class="t" style="left:644px;top:385px;font-size:11.5px;letter-spacing:-0.128px;">900,00</div>
<div class="t" style="left:691px;top:385px;font-size:11.5px;letter-spacing:-1.203px;">R$</div>
<div class="t" style="left:746px;top:385px;font-size:11.5px;letter-spacing:-0.317px;">5.100,00</div>
<div class="t" style="left:802px;top:385px;font-size:11.5px;letter-spacing:-1.203px;">R$</div>
<div class="t" style="left:873px;top:385px;font-size:11.5px;letter-spacing:-0.312px;">15,00</div>
<div class="t" style="left:913px;top:385px;font-size:11.5px;letter-spacing:-1.203px;">R$</div>
<div class="t" style="left:968px;top:385px;font-size:11.5px;letter-spacing:-0.051px;">5.115,00</div>
<div class="t" style="left:1019px;top:385px;font-size:11.5px;letter-spacing:0.164px;">400</div>
<div class="t" style="left:1130px;top:385px;font-size:11.5px;letter-spacing:-0.312px;">0,375</div>
<div class="a" style="left:350px;top:619px;width:114px;height:2px;background:#217346;"></div>
<div class="a" style="left:350px;top:637px;width:109px;height:2px;background:#217346;"></div>
<div class="a" style="left:350px;top:619px;width:2px;height:20px;background:#217346;"></div>
<div class="a" style="left:462px;top:619px;width:2px;height:15px;background:#217346;"></div>
<div class="a" style="left:459px;top:634px;width:7px;height:7px;background:#fff;"></div>
<div class="a" style="left:460px;top:635px;width:5px;height:5px;background:#217346;"></div>
<div class="a" style="left:1341px;top:197px;width:20px;height:476px;background:#e6e6e6;"></div>
<div class="a" style="left:1344px;top:199px;width:15px;height:474px;background:#dadada;"></div>
<div class="a" style="left:1344px;top:199px;width:15px;height:14px;background:#fff;border:1px solid #ababab"></div>
<svg style="left:1344px;top:199px" width="15" height="14" viewBox="0 0 15 14"><path d="M3.5 9 L11.5 9 L7.5 5 Z" fill="#777"/></svg>
<div class="a" style="left:1344px;top:213px;width:15px;height:426px;background:#fff;border:1px solid #ababab"></div>
<div class="a" style="left:1344px;top:658px;width:15px;height:15px;background:#fff;border:1px solid #ababab"></div>
<svg style="left:1344px;top:658px" width="15" height="15" viewBox="0 0 15 15"><path d="M3.5 6 L11.5 6 L7.5 10 Z" fill="#777"/></svg>
</body></html>
